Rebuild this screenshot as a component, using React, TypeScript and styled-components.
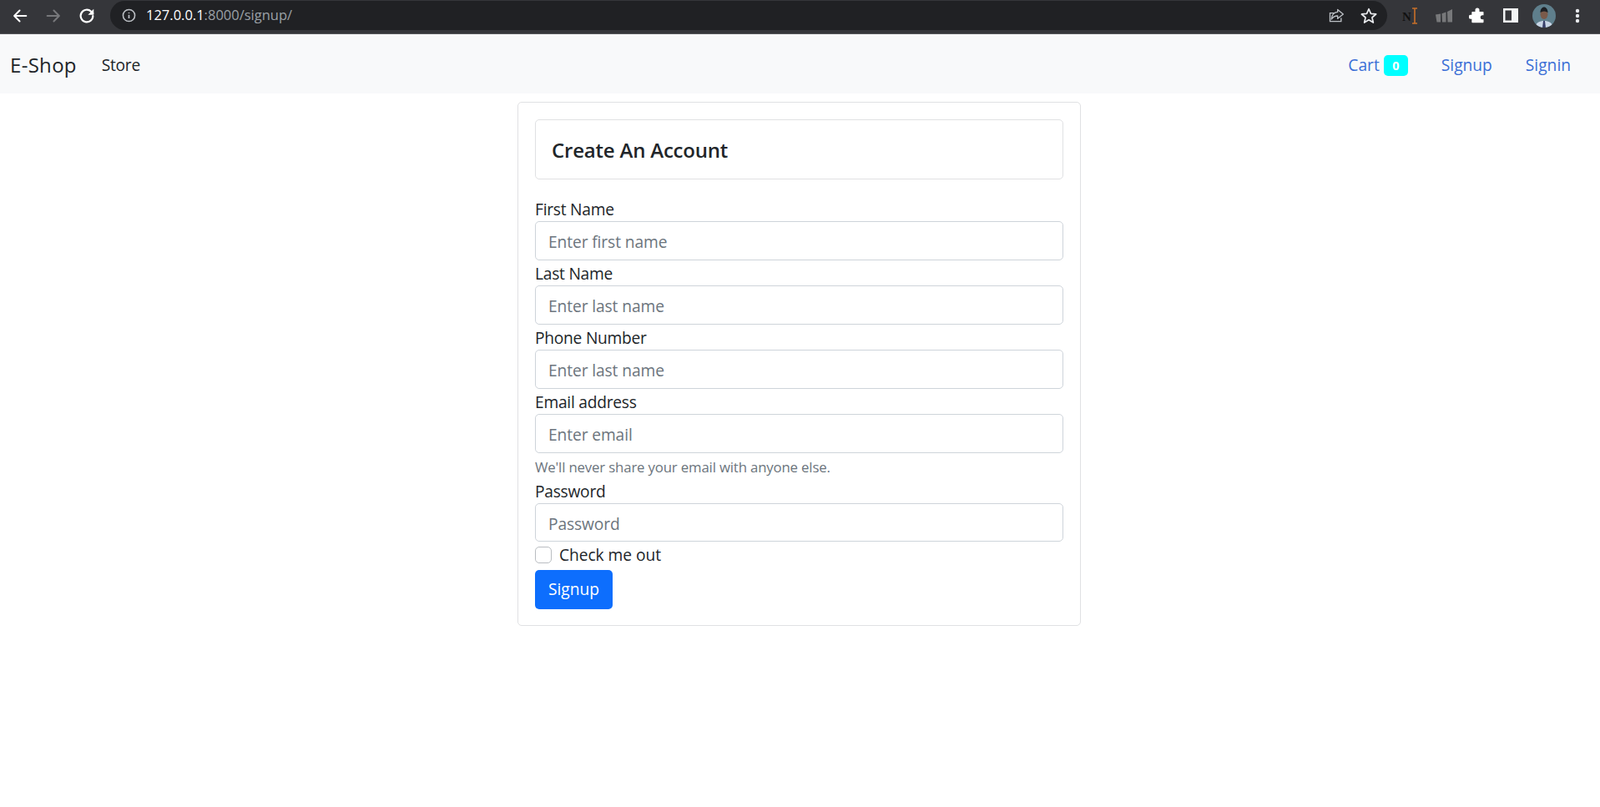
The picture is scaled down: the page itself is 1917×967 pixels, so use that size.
import React from 'react';
import styled, { createGlobalStyle } from 'styled-components';

const Global = createGlobalStyle`
  html, body { margin: 0; padding: 0; background: #fff; }
  body { font-family: "Open Sans", "Noto Sans", "Liberation Sans", sans-serif; color: #212529; font-size: 19.2px; line-height: 1.5; }
  * { box-sizing: border-box; }
`;

const Page = styled.div`
  width: 1917px;
  height: 967px;
  overflow: hidden;
  background: #fff;
`;

const Chrome = styled.header`
  height: 41px;
  background: #35363a;
  border-bottom: 1px solid #55565a;
  display: flex;
  align-items: center;
  padding: 0 0 3px 13px;
`;

const NavIcon = styled.svg<{ $gap?: number }>`
  width: 22px;
  height: 22px;
  flex: none;
  margin-right: ${(p) => p.$gap ?? 0}px;
`;

const Omnibox = styled.div`
  flex: none;
  width: 1530px;
  height: 35px;
  margin-left: 17px;
  border-radius: 18px;
  background: #202124;
  display: flex;
  align-items: center;
  padding: 0 0 0 14px;
  font-family: "Open Sans", sans-serif;
  font-size: 16.5px;
`;

const Host = styled.span`
  color: #fff;
  margin-left: 12px;
`;

const UrlRest = styled.span`
  color: #9aa0a6;
`;

const OmniActions = styled.div`
  margin-left: auto;
  display: flex;
  align-items: center;
  gap: 18px;
  padding-right: 11px;
`;

const Extensions = styled.div`
  flex: none;
  display: flex;
  align-items: center;
  padding-left: 8px;
`;

const ExtensionSlot = styled.div`
  width: 40px;
  height: 32px;
  flex: none;
  display: flex;
  align-items: center;
  justify-content: center;
`;

const Avatar = styled.div`
  width: 28px;
  height: 28px;
  border-radius: 50%;
  overflow: hidden;
  flex: none;
`;

const Navbar = styled.nav`
  height: 71px;
  background: #f8f9fa;
  display: flex;
  align-items: center;
  padding: 2px 15px 0 12px;
`;

const Brand = styled.a`
  font-size: 24px;
  letter-spacing: 0.3px;
  color: #212529;
  font-weight: 400;
  margin-right: 10px;
`;

const NavLink = styled.a<{ $primary?: boolean }>`
  padding: 2px 20px 0;
  color: ${(p) => (p.$primary ? '#3b6fd6' : '#212529')};
  font-size: 19.2px;
  letter-spacing: ${(p) => (p.$primary ? 0 : -0.3)}px;
  display: inline-flex;
  align-items: center;
`;

const Spacer = styled.div`
  flex: 1;
`;

const Badge = styled.span`
  display: inline-flex;
  align-items: center;
  justify-content: center;
  background: #0ff;
  color: #fff;
  font-size: 14.4px;
  font-weight: 700;
  width: 29px;
  height: 25px;
  border-radius: 5px;
  margin-left: 5px;
`;

const Card = styled.main`
  width: 675px;
  margin: 10px 0 0 620px;
  border: 1px solid #e0e1e3;
  border-radius: 5px;
  padding: 20px 20px 19px;
`;

const CardHeader = styled.div`
  height: 72px;
  border: 1px solid #e0e1e3;
  border-radius: 5px;
  padding: 2px 19px 0;
  display: flex;
  align-items: center;
  margin-bottom: 21px;
`;

const Title = styled.h1`
  margin: 0;
  font-size: 24px;
  font-weight: 600;
  letter-spacing: -0.2px;
  color: #212529;
`;

const Label = styled.label`
  display: block;
  height: 29px;
  line-height: 29px;
  font-size: 19.2px;
  letter-spacing: -0.25px;
  color: #212529;
`;

const Input = styled.input`
  display: block;
  width: 100%;
  height: 46.5px;
  border: 1px solid #ced4da;
  border-radius: 5px;
  padding: 3px 15px 0;
  font: inherit;
  font-size: 19.2px;
  letter-spacing: -0.1px;
  margin-bottom: 1.5px;
  &::placeholder { color: #6c757d; opacity: 1; }
`;

const Hint = styled.div`
  font-size: 16.8px;
  letter-spacing: -0.16px;
  color: #6c757d;
  height: 29px;
  line-height: 29px;
  margin-top: 2px;
`;

const CheckRow = styled.div`
  display: flex;
  align-items: center;
  height: 29px;
  letter-spacing: -0.05px;
`;

const Check = styled.span`
  width: 20px;
  height: 20px;
  border: 1px solid #b9bdc1;
  border-radius: 5px;
  margin-right: 9px;
  background: #fff;
`;

const SubmitButton = styled.button`
  display: block;
  width: 93px;
  height: 47px;
  margin-top: 3px;
  border: 0;
  border-radius: 5px;
  background: #0d6efd;
  color: #fff;
  font: inherit;
  font-size: 19.2px;
  padding: 0;
`;

const stroke = { fill: 'none', strokeLinecap: 'round', strokeLinejoin: 'round' } as const;

const fields = [
  ['First Name', 'Enter first name'],
  ['Last Name', 'Enter last name'],
  ['Phone Number', 'Enter last name'],
  ['Email address', 'Enter email'],
];

export default function App() {
  return (
    <Page>
      <Global />
      <Chrome>
        <NavIcon viewBox="0 0 24 24" $gap={18}>
          <path d="M20 12H5M11.5 5L4.500 12l7 7" stroke="#fff" strokeWidth="2.2" {...stroke} />
        </NavIcon>
        <NavIcon viewBox="0 0 24 24" $gap={18}>
          <path d="M4 12h15M12.500 5l7 7-7 7" stroke="#77787b" strokeWidth="2.2" {...stroke} />
        </NavIcon>
        <NavIcon viewBox="0 0 24 24">
          <path d="M20 12a8 8 0 1 1-2.400-5.700L20 8.800" stroke="#fff" strokeWidth="2.4" {...stroke} />
          <path d="M21 3v7.500h-7.500z" fill="#fff" />
        </NavIcon>
        <Omnibox>
          <svg width="17" height="17" viewBox="0 0 24 24">
            <circle cx="12" cy="12" r="10" fill="none" stroke="#bdc1c6" strokeWidth="2.2" />
            <path d="M12 11v6M12 7v1.600" stroke="#bdc1c6" strokeWidth="2.4" />
          </svg>
          <Host>
            127.0.0.1<UrlRest>:8000/signup/</UrlRest>
          </Host>
          <OmniActions>
            <svg width="20" height="20" viewBox="0 0 24 24">
              <path d="M19 15v5H3V8h6" stroke="#bdc1c6" strokeWidth="1.6" fill="none" />
              <path d="M14 3l8 6.500-8 6.500v-4c-4 0-7 1.500-9 5 .5-6 4-10 9-10.500z" stroke="#bdc1c6" strokeWidth="1.6" fill="none" strokeLinejoin="round" />
            </svg>
            <svg width="22" height="22" viewBox="0 0 24 24">
              <path d="M12 3l2.700 6.200 6.700.6-5.100 4.400 1.500 6.600L12 17.300l-5.800 3.500 1.500-6.600-5.100-4.400 6.700-.6z" stroke="#e8eaed" strokeWidth="1.9" fill="none" strokeLinejoin="round" />
            </svg>
          </OmniActions>
        </Omnibox>
        <Extensions>
          <ExtensionSlot>
            <svg width="20" height="22" viewBox="0 0 20 22">
              <text x="0" y="17" fontFamily="Liberation Serif, serif" fontWeight="700" fontSize="15" fill="#111">N</text>
              <path d="M12 2h6M15 2v18M12 20h6" stroke="#c8702a" strokeWidth="1.6" fill="none" />
            </svg>
          </ExtensionSlot>
          <ExtensionSlot>
            <svg width="20" height="16" viewBox="0 0 20 16">
              <path d="M0 6.500L6 5.500V15.500H1.500zM7.500 5.200L12.500 3.500V15.500H8zM14 3L20 0V15.500H14.500z" fill="#77787a" />
            </svg>
          </ExtensionSlot>
          <ExtensionSlot>
            <svg width="20" height="20" viewBox="0 0 24 24">
              <path d="M9 3.500a3 3 0 0 1 6 0V6h5a1 1 0 0 1 1 1v4h-1.500a3 3 0 0 0 0 6H21v4a1 1 0 0 1-1 1H5a1 1 0 0 1-1-1v-4.500H2.500a3 3 0 0 1 0-6H4V7a1 1 0 0 1 1-1h4z" fill="#fff" />
            </svg>
          </ExtensionSlot>
          <ExtensionSlot>
            <svg width="18" height="17" viewBox="0 0 18 17">
              <path d="M0 0h18v17H0z" fill="#f1f3f4" />
              <path d="M2.500 2.500h7.500v12H2.500z" fill="#35363a" />
            </svg>
          </ExtensionSlot>
          <ExtensionSlot>
            <Avatar>
              <svg width="28" height="28" viewBox="0 0 28 28">
                <rect width="28" height="28" fill="#5f7f8c" />
                <path d="M3 28c1-6 6-8 11-8s10 2 11 8z" fill="#c9d6e6" />
                <ellipse cx="14" cy="12" rx="4.500" ry="6" fill="#7a5a4a" />
                <path d="M9.500 10c0-5 3-6.500 4.500-6.500s4.500 1.500 4.500 6.500c-3-2-6-2-9 0z" fill="#1d2024" />
                <path d="M13 20h2l1 8h-4z" fill="#39406a" />
              </svg>
            </Avatar>
          </ExtensionSlot>
          <ExtensionSlot>
            <svg width="6" height="18" viewBox="0 0 6 18">
              <circle cx="3" cy="3" r="2.200" fill="#e8eaed" />
              <circle cx="3" cy="9" r="2.200" fill="#e8eaed" />
              <circle cx="3" cy="15" r="2.200" fill="#e8eaed" />
            </svg>
          </ExtensionSlot>
        </Extensions>
      </Chrome>
      <Navbar>
        <Brand>E-Shop</Brand>
        <NavLink>Store</NavLink>
        <Spacer />
        <NavLink $primary>
          Cart<Badge>0</Badge>
        </NavLink>
        <NavLink $primary>Signup</NavLink>
        <NavLink $primary>Signin</NavLink>
      </Navbar>
      <Card>
        <CardHeader>
          <Title>Create An Account</Title>
        </CardHeader>
        {fields.map(([label, placeholder]) => (
          <div key={label}>
            <Label>{label}</Label>
            <Input placeholder={placeholder} />
          </div>
        ))}
        <Hint>We'll never share your email with anyone else.</Hint>
        <Label>Password</Label>
        <Input placeholder="Password" />
        <CheckRow>
          <Check />
          Check me out
        </CheckRow>
        <SubmitButton>Signup</SubmitButton>
      </Card>
    </Page>
  );
}
